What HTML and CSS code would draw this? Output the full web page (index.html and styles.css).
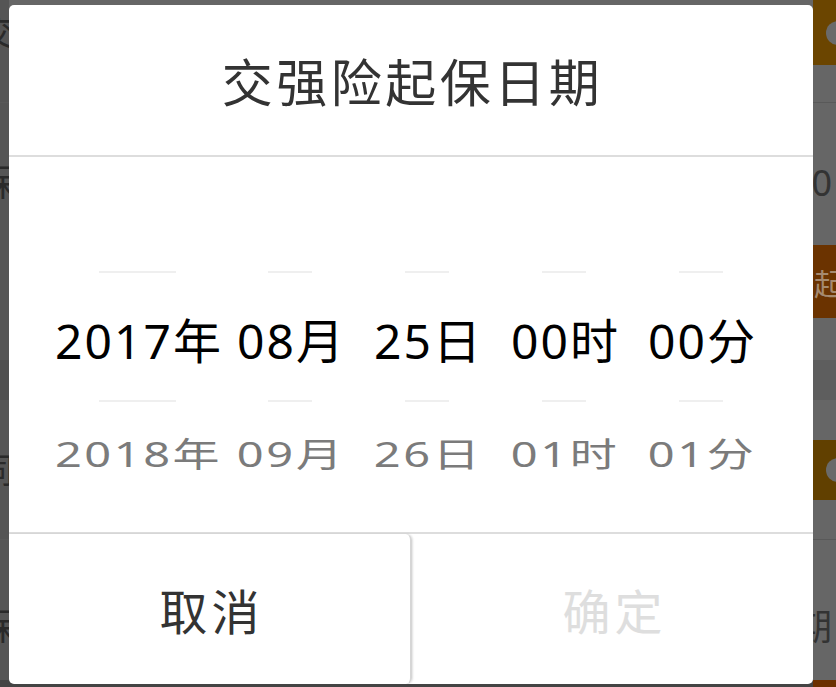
FILE: index.html
```html
<!DOCTYPE html>
<html lang="zh-CN">
<head>
<meta charset="utf-8">
<title>交强险起保日期</title>
<link rel="stylesheet" href="styles.css">
</head>
<body>
<div class="page">
  <div class="row r1"><span class="ltxt">交</span><span class="side brown"><span class="dot"></span></span></div>
  <div class="row r2 sep"></div>
  <div class="row r3"><span class="ltxt">保</span><span class="rtxt">0</span></div>
  <div class="row r4"><span class="side rust"><span class="btxt">起</span></span></div>
  <div class="row r5"></div>
  <div class="row r6"></div>
  <div class="row r7"></div>
  <div class="row r8"><span class="ltxt small">同</span><span class="side brown2"><span class="dot"></span></span></div>
  <div class="row r9 sep"></div>
  <div class="row r10"><span class="ltxt">保</span><span class="rtxt">期</span></div>
  <div class="row r11"></div>
</div>

<div class="dialog">
  <div class="title">交强险起保日期</div>
  <div class="picker">
    <div class="col c-wide"><span class="line wide"></span><div class="sel">2017年</div><span class="line wide"></span><div class="next">2018年</div></div>
    <div class="col"><span class="line"></span><div class="sel">08月</div><span class="line"></span><div class="next">09月</div></div>
    <div class="col"><span class="line"></span><div class="sel">25日</div><span class="line"></span><div class="next">26日</div></div>
    <div class="col"><span class="line"></span><div class="sel">00时</div><span class="line"></span><div class="next">01时</div></div>
    <div class="col"><span class="line"></span><div class="sel">00分</div><span class="line"></span><div class="next">01分</div></div>
  </div>
  <div class="actions">
    <div class="btn cancel">取消</div>
    <div class="btn ok">确定</div>
  </div>
</div>
</body>
</html>
```

FILE: styles.css
```css
* { box-sizing: border-box; margin: 0; padding: 0; }
html, body { width: 836px; height: 687px; overflow: hidden; }
body {
  font-family: "Noto Sans", "Noto Sans CJK SC", sans-serif;
  background: #666;
}
.page {
  width: 836px;
  height: 687px;
  display: flex;
  flex-direction: column;
  background: linear-gradient(to right, #555 0, #555 9px, #666 9px);
}
.row { display: flex; align-items: center; position: relative; }
.sep { border-bottom: 1px solid #595959; }
.r1 { height: 65px; }
.r2 { height: 38px; }
.r3 { height: 142px; padding-top: 18px; }
.r4 { height: 73px; }
.r5 { height: 42px; }
.r6 { height: 40px; background: linear-gradient(to right, #4f4f4f 0, #4f4f4f 9px, #5e5e5e 9px); }
.r7 { height: 40px; }
.r8 { height: 60px; }
.r9 { height: 40px; }
.r10 { height: 140px; padding-top: 34px; }
.r11 { height: 7px; background: linear-gradient(to right, #444 0, #444 813px, #6b3000 813px); }

.ltxt {
  font-size: 36px;
  color: #2a2a2a;
  margin-left: -20px;
  line-height: 1;
}
.ltxt.small { font-size: 34px; }
.rtxt {
  margin-left: auto;
  margin-right: 4px;
  font-size: 36px;
  color: #333;
  line-height: 1;
}
.side {
  margin-left: auto;
  width: 23px;
  align-self: stretch;
  display: flex;
  align-items: center;
  justify-content: flex-end;
  overflow: hidden;
}
.brown { background: #6b4500; }
.brown2 { background: #614000; }
.rust { background: #6b3300; }
.dot {
  width: 24px; height: 24px; border-radius: 50%;
  background: #6a6a6a;
  margin-right: -14px;
  flex: none;
}
.btxt {
  font-size: 30px;
  color: #a58a70;
  margin-right: -8px;
  flex: none;
}

.dialog {
  position: absolute;
  left: 9px;
  top: 5px;
  width: 804px;
  height: 679px;
  background: #fff;
  border-radius: 5px;
  display: flex;
  flex-direction: column;
  overflow: hidden;
}
.title {
  height: 152px;
  border-bottom: 2px solid #dddddd;
  display: flex;
  align-items: center;
  justify-content: center;
  font-size: 51px;
  letter-spacing: 3.5px;
  color: #333;
  padding-left: 3px;
  padding-bottom: 0;
}
.picker {
  height: 377px;
  display: flex;
  padding: 114px 44px 0 44px;
  border-bottom: 2px solid #dddddd;
}
.col {
  width: 137px;
  display: flex;
  flex-direction: column;
  align-items: center;
}
.col.c-wide { width: 168px; }
.line {
  display: block;
  width: 44px;
  height: 2px;
  background: #efefef;
  flex: none;
}
.line.wide { width: 77px; }
.sel {
  height: 127px;
  display: flex;
  align-items: center;
  padding-top: 3px;
  padding-left: 4px;
  font-size: 48px;
  letter-spacing: 2px;
  color: #000;
  white-space: nowrap;
}
.next {
  padding-top: 25px;
  padding-left: 3px;
  font-size: 47px;
  line-height: 62px;
  letter-spacing: 2.5px;
  color: #7b7b7b;
  white-space: nowrap;
  transform: scaleY(0.72);
}
.actions {
  flex: 1;
  display: flex;
}
.btn {
  flex: 1;
  display: flex;
  align-items: center;
  justify-content: center;
  font-size: 48px;
  letter-spacing: 4px;
  padding-left: 4px;
}
.cancel {
  color: #333;
  border-radius: 0 6px 6px 0;
  box-shadow: 1px 0 2px rgba(0,0,0,0.12);
  border-right: 2px solid #d6d6d6;
}
.ok {
  color: #dedede;
}
```
